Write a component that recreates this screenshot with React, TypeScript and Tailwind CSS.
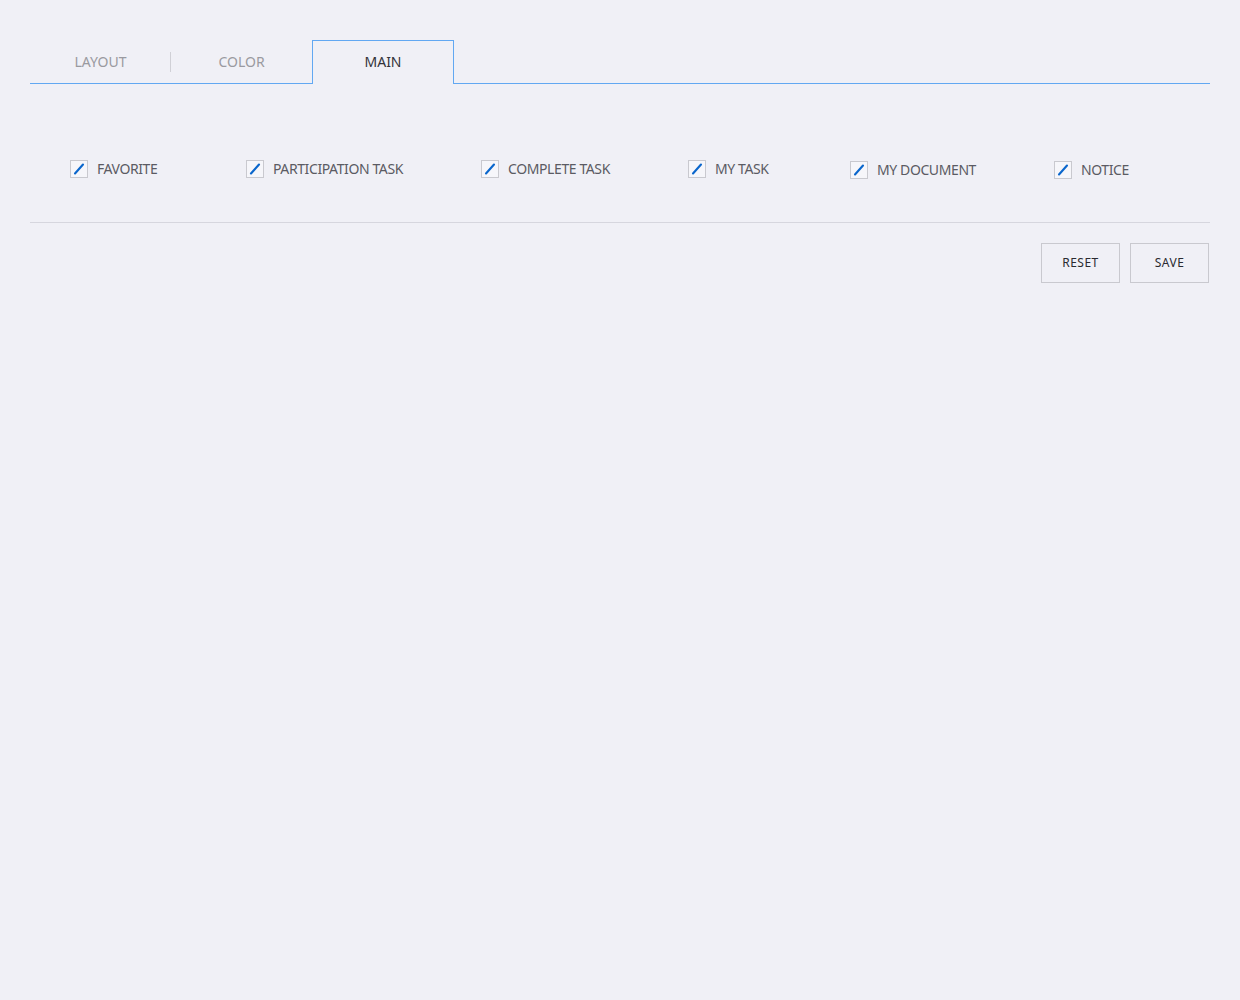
import React from "react";

const tabs = ["LAYOUT", "COLOR", "MAIN"];

const items = [
  { label: "FAVORITE", w: "w-[176px]", top: "" },
  { label: "PARTICIPATION TASK", w: "w-[235px]", top: "" },
  { label: "COMPLETE TASK", w: "w-[207px]", top: "" },
  { label: "MY TASK", w: "w-[162px]", top: "" },
  { label: "MY DOCUMENT", w: "w-[204px]", top: "mt-[1px]" },
  { label: "NOTICE", w: "w-[150px]", top: "mt-[1px]" },
];

const CheckMark = () => (
  <span className="flex h-[18px] w-[18px] shrink-0 items-center justify-center border border-[#c9c9cf] bg-[#f6f6fa]">
    <svg width="12" height="12" viewBox="0 0 12 12">
      <line x1="2" y1="10.5" x2="10" y2="1.5" stroke="#0a66cc" strokeWidth="2.1" strokeLinecap="round" />
    </svg>
  </span>
);

export default function App() {
  return (
    <div className="min-h-[1000px] bg-[#f0f0f6] px-[30px] pt-[40px] font-['Noto_Sans',sans-serif]">
      <div className="flex h-[44px] border-b border-[#62a8f2]">
        {tabs.map((t, i) => {
          const active = t === "MAIN";
          return (
            <div
              key={t}
              className={
                active
                  ? "relative -mb-px flex w-[142px] items-center justify-center border border-b-0 border-[#62a8f2] bg-[#f0f0f6] pb-[2px] text-[14px] text-[#33333a]"
                  : "relative flex w-[141px] items-center justify-center text-[14px] text-[#9a9aa0]"
              }
            >
              {t}
              {i === 0 && <span className="absolute right-0 top-[12px] h-[20px] w-px bg-[#d0d0d6]" />}
            </div>
          );
        })}
      </div>

      <div className="flex items-start border-b border-[#d6d6de] pb-[43px] pl-[40px] pt-[76px]">
        {items.map((it) => (
          <div key={it.label} className={`flex items-center gap-[9px] ${it.w} ${it.top}`}>
            <CheckMark />
            <span className="text-[14px] leading-[18px] tracking-[-0.4px] text-[#5b5b63]">{it.label}</span>
          </div>
        ))}
      </div>

      <div className="flex justify-end gap-[10px] pr-px pt-[20px]">
        {["RESET", "SAVE"].map((b) => (
          <button
            key={b}
            className="h-[40px] w-[79px] border border-[#c9c9cf] bg-[#f0f0f6] text-[12px] tracking-[0.5px] text-[#2a2a30]"
          >
            {b}
          </button>
        ))}
      </div>
    </div>
  );
}
